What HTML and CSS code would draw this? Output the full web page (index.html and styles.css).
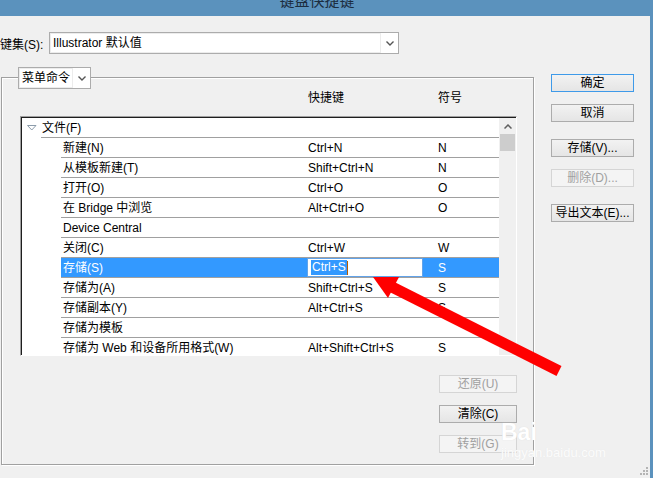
FILE: index.html
```html
<!DOCTYPE html>
<html lang="zh-CN">
<head>
    <meta charset="UTF-8">
    <meta name="viewport" content="width=device-width, initial-scale=1.0">
    <title>键盘快捷键</title>
    <link rel="stylesheet" href="styles.css">
</head>
<body>

    <div class="window">
        <div class="titlebar"><span class="title">键盘快捷键</span></div>

        <!-- key set -->
        <div class="set-row">
            <span class="set-label">键集(S):</span>
            <div class="combo combo-set">
                <span class="combo-text">Illustrator 默认值</span>
                <span class="combo-arrow"><svg width="8" height="5" viewBox="0 0 8 5"><path d="M0.5 0.5 L4 4 L7.5 0.5" fill="none" stroke="#555" stroke-width="1.4"/></svg></span>
            </div>
        </div>

        <div class="main">
            <div class="groupbox">
                <div class="combo combo-legend">
                    <span class="combo-text">菜单命令</span>
                    <span class="combo-arrow"><svg width="8" height="5" viewBox="0 0 8 5"><path d="M0.5 0.5 L4 4 L7.5 0.5" fill="none" stroke="#555" stroke-width="1.4"/></svg></span>
                </div>

                <div class="col-head">
                    <span class="head-key">快捷键</span>
                    <span>符号</span>
                </div>

                <div class="list">
                    <div class="list-inner">
                        <div class="rows">
                            <div class="row">
                                <div class="twisty twisty-top"><svg width="10" height="6" viewBox="0 0 10 6"><path d="M0.5 0.5 H9 L4.75 5 Z" fill="#fff" stroke="#8c9cab"/></svg></div>
                                <div class="cells"><span class="name name-top">文件(F)</span></div>
                            </div>
                            <div class="row"><div class="twisty"></div><div class="cells"><span class="name">新建(N)</span><span class="key">Ctrl+N</span><span class="sym">N</span></div></div>
                            <div class="row"><div class="twisty"></div><div class="cells"><span class="name">从模板新建(T)</span><span class="key">Shift+Ctrl+N</span><span class="sym">N</span></div></div>
                            <div class="row"><div class="twisty"></div><div class="cells"><span class="name">打开(O)</span><span class="key">Ctrl+O</span><span class="sym">O</span></div></div>
                            <div class="row"><div class="twisty"></div><div class="cells"><span class="name">在 Bridge 中浏览</span><span class="key">Alt+Ctrl+O</span><span class="sym">O</span></div></div>
                            <div class="row"><div class="twisty"></div><div class="cells"><span class="name">Device Central</span><span class="key"></span><span class="sym"></span></div></div>
                            <div class="row"><div class="twisty"></div><div class="cells"><span class="name">关闭(C)</span><span class="key">Ctrl+W</span><span class="sym">W</span></div></div>
                            <div class="row sel"><div class="twisty"></div><div class="cells"><span class="name">存储(S)</span><span class="key"><span class="edit"><span class="edit-sel">Ctrl+S</span><span class="caret"></span></span></span><span class="sym">S</span></div></div>
                            <div class="row"><div class="twisty"></div><div class="cells"><span class="name">存储为(A)</span><span class="key">Shift+Ctrl+S</span><span class="sym">S</span></div></div>
                            <div class="row"><div class="twisty"></div><div class="cells"><span class="name">存储副本(Y)</span><span class="key">Alt+Ctrl+S</span><span class="sym">S</span></div></div>
                            <div class="row"><div class="twisty"></div><div class="cells"><span class="name">存储为模板</span><span class="key"></span><span class="sym"></span></div></div>
                            <div class="row"><div class="twisty"></div><div class="cells"><span class="name">存储为 Web 和设备所用格式(W)</span><span class="key">Alt+Shift+Ctrl+S</span><span class="sym">S</span></div></div>
                        </div>
                        <div class="scrollbar">
                            <div class="sb-btn"><svg width="8" height="5" viewBox="0 0 8 5"><path d="M0.5 4.5 L4 1 L7.5 4.5" fill="none" stroke="#606060" stroke-width="1.5"/></svg></div>
                            <div class="thumb"></div>
                            <div class="sb-track"></div>
                            <div class="sb-btn"><svg width="8" height="5" viewBox="0 0 8 5"><path d="M0.5 0.5 L4 4 L7.5 0.5" fill="none" stroke="#606060" stroke-width="1.5"/></svg></div>
                        </div>
                    </div>
                </div>

                <div class="side-btns">
                    <button class="btn btn-side" disabled>还原(U)</button>
                    <button class="btn btn-side">清除(C)</button>
                    <button class="btn btn-side" disabled>转到(G)</button>
                </div>
            </div>

            <div class="dlg-btns">
                <button class="btn btn-dlg btn-default">确定</button>
                <button class="btn btn-dlg">取消</button>
                <button class="btn btn-dlg spaced">存储(V)...</button>
                <button class="btn btn-dlg" disabled>删除(D)...</button>
                <button class="btn btn-dlg spaced">导出文本(E)...</button>
            </div>
        </div>
    </div>

    <!-- annotation drawn over the dialog -->
    <svg class="markup" width="653" height="478" viewBox="0 0 653 478">
        <line x1="390" y1="286" x2="559" y2="371" stroke="#ff0000" stroke-width="11"/>
        <polygon points="373,277 399,277 388,298" fill="#ff0000"/>
    </svg>

    <div class="watermark">
        <div class="wm-big">Bai</div>
        <div class="wm-small">jingyan.baidu.com</div>
    </div>

    <svg class="grip" width="10" height="10" viewBox="0 0 10 10">
        <rect x="7" y="1" width="2" height="2" fill="#b4b4b4"/>
        <rect x="4" y="4" width="2" height="2" fill="#b4b4b4"/>
        <rect x="7" y="4" width="2" height="2" fill="#b4b4b4"/>
        <rect x="1" y="7" width="2" height="2" fill="#b4b4b4"/>
        <rect x="4" y="7" width="2" height="2" fill="#b4b4b4"/>
        <rect x="7" y="7" width="2" height="2" fill="#b4b4b4"/>
    </svg>

</body>
</html>
```

FILE: styles.css
```css
body {
    margin: 0;
    width: 653px;
    height: 478px;
    overflow: hidden;
    position: relative;
    background: #f0f0f0;
    font: 12px "Liberation Sans", "Noto Sans CJK SC", sans-serif;
    color: #000;
}
.window {
    height: 478px;
    box-sizing: border-box;
    border-right: 3px solid #5b92bd;
}
.titlebar {
    height: 16px;
    background: #5b92bd;
    overflow: hidden;
    display: flex;
    justify-content: center;
    padding-right: 16px;
}
.title {
    font-size: 15px;
    line-height: 15px;
    margin-top: -7px;
    color: #1c2d3f;
}

/* combos */
.set-row {
    display: flex;
    align-items: center;
    margin-top: 16px;
    height: 22px;
}
.set-label {
    width: 49px;
    flex: none;
    white-space: nowrap;
}
.combo {
    display: flex;
    height: 22px;
    box-sizing: border-box;
    border: 1px solid #acacac;
    background: #fff;
}
.combo-set {
    width: 350px;
}
.combo-text {
    flex: 1;
    border: 1px solid #ececec;
    line-height: 18px;
    padding-left: 2px;
    white-space: nowrap;
}
.combo-arrow {
    width: 17px;
    flex: none;
    display: flex;
    align-items: center;
    justify-content: center;
}
.combo-legend {
    width: 73px;
    margin: -11px 0 0 -2px;
}

/* group box */
.main {
    display: flex;
    align-items: flex-start;
    margin-top: 20px;
}
.groupbox {
    margin: 3px 0 0 1px;
    width: 533px;
    height: 388px;
    box-sizing: border-box;
    border: 1px solid #a0a0a0;
    box-shadow: inset 1px 1px 0 #fff, 1px 1px 0 #fff;
    padding: 0 16px 0 18px;
    display: flex;
    flex-direction: column;
}
.col-head {
    display: flex;
    height: 27px;
    line-height: 18px;
    padding-left: 288px;
}
.head-key {
    width: 130px;
}

/* list */
.list {
    width: 497px;
    height: 240px;
    box-sizing: border-box;
    border: 1px solid;
    border-color: #a0a0a0 #fff #fff #a0a0a0;
}
.list-inner {
    display: flex;
    height: 100%;
    box-sizing: border-box;
    border-top: 1px solid #1e1e1e;
    border-left: 1px solid #1e1e1e;
}
.rows {
    width: 477px;
    flex: none;
    background: #fff;
    overflow: hidden;
}
.row {
    display: flex;
    height: 20px;
}
.twisty {
    width: 39px;
    flex: none;
}
.twisty-top {
    width: 19px;
    box-sizing: border-box;
    padding: 7px 0 0 5px;
}
.twisty-top svg {
    display: block;
}
.cells {
    flex: 1;
    display: flex;
    border-bottom: 1px solid #a0a0a0;
    line-height: 20px;
    height: 19px;
    white-space: nowrap;
}
.name {
    width: 246px;
    flex: none;
    box-sizing: border-box;
    padding-left: 2px;
}
.name-top {
    padding-left: 1px;
}
.key {
    width: 131px;
    flex: none;
    box-sizing: border-box;
    padding-left: 1px;
}
.sym {
    flex: 1;
}
.sel .cells {
    background: #3399ff;
    color: #fff;
}
.sel .key {
    padding-left: 0;
}
.edit {
    display: flex;
    align-items: center;
    width: 116px;
    height: 19px;
    box-sizing: border-box;
    border: 1px solid #62a3e9;
    background: #fff;
    padding-left: 3px;
}
.edit-sel {
    background: #3399ff;
    color: #fff;
    line-height: 15px;
    padding: 0 1px;
}
.caret {
    width: 1px;
    height: 14px;
    background: #b85c00;
}

/* scrollbar */
.scrollbar {
    width: 17px;
    flex: none;
    background: #f0f0f0;
    display: flex;
    flex-direction: column;
}
.sb-btn {
    height: 16px;
    display: flex;
    align-items: center;
    justify-content: center;
}
.thumb {
    height: 17px;
    margin: 0 1px;
    background: #cdcdcd;
}
.sb-track {
    flex: 1;
}

/* buttons */
.btn {
    height: 18px;
    box-sizing: border-box;
    border: 1px solid #acacac;
    background: linear-gradient(#f2f2f2, #e5e5e5);
    font: inherit;
    line-height: 16px;
    padding: 0;
    text-align: center;
    color: #000;
    white-space: nowrap;
}
.btn:disabled {
    border-color: #d5d5d5;
    background: #f4f4f4;
    color: #a0a0a0;
}
.btn-default {
    border-color: #3e9ae9;
}
.side-btns {
    display: flex;
    flex-direction: column;
    align-items: flex-end;
    gap: 12px;
    margin-top: 19px;
}
.btn-side {
    width: 78px;
}
.dlg-btns {
    margin-left: 17px;
    display: flex;
    flex-direction: column;
}
.btn-dlg {
    width: 83px;
}
.btn-dlg + .btn-dlg {
    margin-top: 12px;
}
.btn-dlg.spaced {
    margin-top: 17px;
}

/* overlays */
.markup {
    position: absolute;
    left: 0;
    top: 0;
    pointer-events: none;
}
.watermark {
    position: absolute;
    left: 501px;
    top: 419px;
    color: #fff;
    pointer-events: none;
}
.wm-big {
    font: bold 23px "Liberation Sans", sans-serif;
    line-height: 26px;
    text-shadow: 0 0 1px #d6d6d6;
}
.wm-small {
    font-size: 13px;
    line-height: 15px;
    color: #fcfcfc;
    text-shadow: 0 0 1px #e6e6e6;
}
.grip {
    position: absolute;
    left: 639px;
    top: 466px;
}
```
